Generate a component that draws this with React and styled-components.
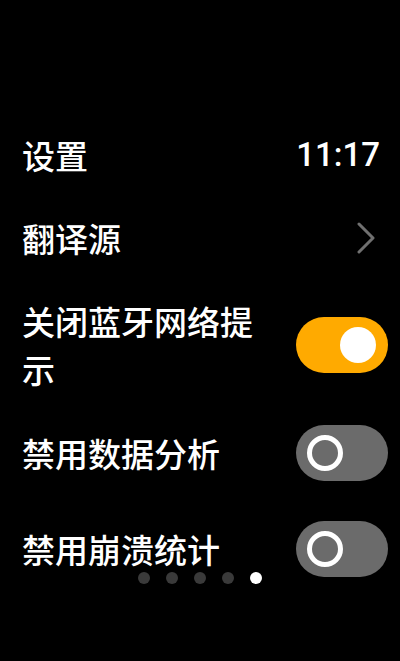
import React from "react";
import styled, { createGlobalStyle } from "styled-components";

const Global = createGlobalStyle`
  html, body { margin: 0; padding: 0; background: #000; }
  body { width: 400px; height: 661px; overflow: hidden; }
  #root { width: 400px; height: 661px; }
`;

const Screen = styled.div`
  position: relative;
  width: 400px;
  height: 661px;
  background: #000;
  color: #fff;
  font-family: "Noto Sans CJK SC", "Noto Sans", sans-serif;
  box-sizing: border-box;
  padding: 131px 12px 0 22px;
  display: flex;
  flex-direction: column;
`;

const Row = styled.div`
  display: flex;
  align-items: center;
  justify-content: space-between;
  gap: 20px;
  margin-top: ${(p) => p.$top || 0}px;
  min-height: ${(p) => p.$minH || 48}px;
`;

const Label = styled.div`
  flex: 1;
  font-size: 33px;
  line-height: 48px;
  font-weight: 500;
  letter-spacing: 0;
`;

const Clock = styled.div`
  font-family: Roboto, "Noto Sans", sans-serif;
  font-size: 33px;
  font-weight: 500;
  line-height: 48px;
  margin-right: 8px;
`;

const Chevron = styled.svg`
  width: 20px;
  height: 32px;
  margin-right: 12px;
  flex-shrink: 0;
`;

const Track = styled.div`
  width: 92px;
  height: 56px;
  border-radius: 28px;
  background: ${(p) => (p.$on ? "#ffaa00" : "#6b6b6b")};
  display: flex;
  align-items: center;
  justify-content: ${(p) => (p.$on ? "flex-end" : "flex-start")};
  padding: 0 12px 0 11px;
  box-sizing: border-box;
  flex-shrink: 0;
`;

const Knob = styled.div`
  width: 36px;
  height: 36px;
  border-radius: 50%;
  box-sizing: border-box;
  background: ${(p) => (p.$on ? "#fff" : "transparent")};
  border: ${(p) => (p.$on ? "none" : "5px solid #fff")};
`;

const Dots = styled.div`
  position: absolute;
  left: 0;
  right: 0;
  top: 572px;
  display: flex;
  justify-content: center;
  gap: 16px;
`;

const Dot = styled.span`
  width: 12px;
  height: 12px;
  border-radius: 50%;
  background: ${(p) => (p.$active ? "#fff" : "#3a3a3a")};
`;

const Toggle = ({ on }) => (
  <Track $on={on}>
    <Knob $on={on} />
  </Track>
);

export default function App() {
  return (
    <>
      <Global />
      <Screen>
        <Row>
          <Label>设置</Label>
          <Clock>11:17</Clock>
        </Row>
        <Row $top={35}>
          <Label>翻译源</Label>
          <Chevron viewBox="0 0 20 32">
            <path d="M3 2 L17 16 L3 30" fill="none" stroke="#707070" strokeWidth="3" strokeLinecap="round" strokeLinejoin="round" />
          </Chevron>
        </Row>
        <Row $top={35}>
          <Label>关闭蓝牙网络提示</Label>
          <Toggle on />
        </Row>
        <Row $top={32} $minH={56}>
          <Label>禁用数据分析</Label>
          <Toggle />
        </Row>
        <Row $top={40} $minH={56}>
          <Label>禁用崩溃统计</Label>
          <Toggle />
        </Row>
        <Dots>
          <Dot />
          <Dot />
          <Dot />
          <Dot />
          <Dot $active />
        </Dots>
      </Screen>
    </>
  );
}
